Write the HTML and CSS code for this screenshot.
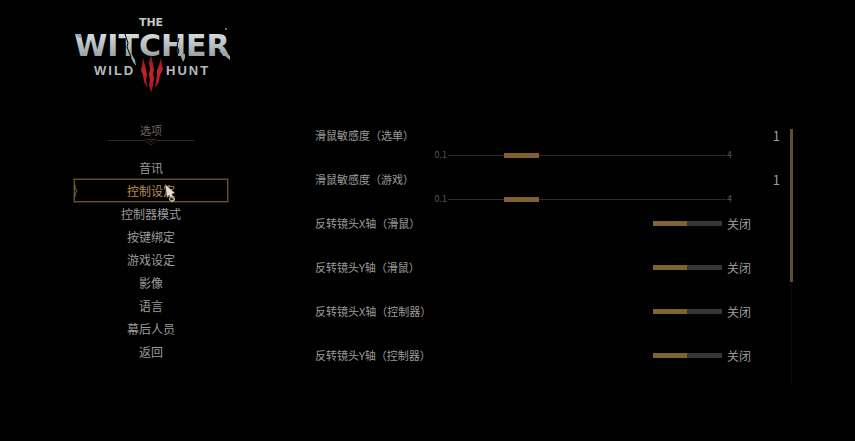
FILE: index.html
```html
<!DOCTYPE html>
<html lang="zh-Hans">
<head>
<meta charset="utf-8">
<title>控制设定</title>
<link rel="stylesheet" href="styles.css">
</head>
<body>
<div class="screen">
  <aside class="sidebar">
    <svg class="logo" viewBox="0 0 160 84" role="img" aria-label="The Witcher Wild Hunt">
      <defs>
        <linearGradient id="steel" x1="0" y1="0" x2="0" y2="1">
          <stop offset="0" stop-color="#e6ebec"/>
          <stop offset=".5" stop-color="#b5bec1"/>
          <stop offset="1" stop-color="#859195"/>
        </linearGradient>
        <linearGradient id="blood" x1="0" y1="0" x2="0" y2="1">
          <stop offset="0" stop-color="#8e1720"/>
          <stop offset=".5" stop-color="#c9222e"/>
          <stop offset="1" stop-color="#8e1720"/>
        </linearGradient>
      </defs>
      <text class="logo-the" x="77" y="12" text-anchor="middle">THE</text>
      <text class="logo-main" x="78" y="42" text-anchor="middle" fill="url(#steel)">WITCHER</text>
      <path d="M1 20h5l2 4H5zM52 38l4 3 3 7 3 4-1-6-4-7zM106 40h5v4l-2 4zM149 37l7 5v4l-11-9z" fill="#98a3a7"/>
      <path d="M51 20l3 9-1 4 4 10M105 24l-2 8 2 5-2 5" fill="none" stroke="#010101"/>
      <text class="logo-sub" x="20" y="61">WILD</text>
      <text class="logo-sub" x="92" y="61">HUNT</text>
      <circle cx="152" cy="15" r="1" fill="#8d9699"/>
      <g fill="url(#blood)">
        <path d="M69 44l2 7 1 5 1 5-1 5 2 8-4-6-1-7-2-5 1-4z"/>
        <path d="M77 41l2 9 1 6-1 4 1 5-1 6-2 8-2-8 1-5-1-6 1-5-1-6z"/>
        <path d="M87 44l-2 7-2 5v5l-1 5-1 8 4-6 1-7 3-6-1-4z"/>
      </g>
    </svg>
    <h1 class="title">选项</h1>
    <svg class="ornament" viewBox="0 0 86 8" aria-hidden="true">
      <path d="M0 2.5h36l3-1h8l3 1h36M38 3l5 4 5-4M41 2l2 2 2-2" fill="none" stroke="#2e2b26"/>
    </svg>
    <nav class="menu">
      <a class="item" href="#audio">音讯</a>
      <a class="item selected" href="#control" aria-current="page">控制设定
        <svg class="notch" viewBox="0 0 5 12" aria-hidden="true"><path d="M1 0v3l2 3-2 3v3" fill="none" stroke="#8a6a3c"/></svg>
        <svg class="cursor" viewBox="0 0 14 22" aria-hidden="true">
          <path d="M1 1l10 9-3 1 2 4-2 1-3-4-2 3z" fill="#e4dfd3" stroke="#39342c" stroke-width=".5"/>
          <circle cx="8" cy="16" r="2.5" fill="#292620" stroke="#c9c3b6"/>
          <path d="M6 13l4 3M7 18l3-1" stroke="#c9c3b6"/>
        </svg>
      </a>
      <a class="item" href="#pad">控制器模式</a>
      <a class="item" href="#keys">按键绑定</a>
      <a class="item" href="#game">游戏设定</a>
      <a class="item" href="#video">影像</a>
      <a class="item" href="#language">语言</a>
      <a class="item" href="#credits">幕后人员</a>
      <a class="item" href="#back">返回</a>
    </nav>
  </aside>
  <main class="panel">
    <div class="settings">
      <div class="row">
        <div class="line"><label for="menu-speed">滑鼠敏感度（选单）</label><output for="menu-speed">1</output></div>
        <div class="scale"><span class="low">0.1</span><input class="slider" id="menu-speed" type="range" min="0.1" max="4" step="0.1" value="1"><span>4</span></div>
      </div>
      <div class="row">
        <div class="line"><label for="game-speed">滑鼠敏感度（游戏）</label><output for="game-speed">1</output></div>
        <div class="scale"><span class="low">0.1</span><input class="slider" id="game-speed" type="range" min="0.1" max="4" step="0.1" value="1"><span>4</span></div>
      </div>
      <div class="row">
        <div class="line"><label for="mouse-x">反转镜头X轴（滑鼠）</label><span class="option"><input class="toggle" id="mouse-x" type="checkbox"><span>关闭</span></span></div>
      </div>
      <div class="row">
        <div class="line"><label for="mouse-y">反转镜头Y轴（滑鼠）</label><span class="option"><input class="toggle" id="mouse-y" type="checkbox"><span>关闭</span></span></div>
      </div>
      <div class="row">
        <div class="line"><label for="pad-x">反转镜头X轴（控制器）</label><span class="option"><input class="toggle" id="pad-x" type="checkbox"><span>关闭</span></span></div>
      </div>
      <div class="row">
        <div class="line"><label for="pad-y">反转镜头Y轴（控制器）</label><span class="option"><input class="toggle" id="pad-y" type="checkbox"><span>关闭</span></span></div>
      </div>
    </div>
    <div class="scroll"><div class="scroll-thumb"></div></div>
  </main>
</div>
</body>
</html>
```
FILE: styles.css
```css
* {
  box-sizing: border-box;
}

body {
  margin: 0;
  min-height: 100vh;
  background: #010101;
  color: #9b9b9b;
  font-family: "Noto Sans CJK SC", sans-serif;
  font-size: 12px;
}

.screen {
  display: grid;
  grid-template-columns: 154px 1fr;
  column-gap: 87px;
  padding: 14px 62px 0 74px;
}

.sidebar {
  display: flex;
  flex-direction: column;
  align-items: center;
}

.logo {
  display: block;
  align-self: flex-start;
  width: 160px;
  height: 84px;
  overflow: visible;
}

.logo-the,
.logo-main {
  font-family: "DejaVu Sans", sans-serif;
  font-weight: bold;
}

.logo-the {
  font-size: 11px;
  fill: #c3c9cb;
}

.logo-main {
  font-size: 30px;
}

.logo-sub {
  font-family: "Liberation Sans", sans-serif;
  font-size: 13px;
  font-weight: bold;
  letter-spacing: 2px;
  fill: #b4babc;
}

.title {
  margin: 24px 0 0;
  font-size: 11px;
  font-weight: 400;
  line-height: 16px;
  color: #6e6860;
}

.ornament {
  display: block;
  width: 86px;
  height: 8px;
}

.menu {
  align-self: stretch;
  margin-top: 10px;
}

.item {
  display: block;
  position: relative;
  height: 23px;
  line-height: 23px;
  text-align: center;
  color: inherit;
  text-decoration: none;
}

.selected {
  color: #bd8d49;
  box-shadow: inset 0 0 0 1px #684f2e, 0 0 0 1px #2b2114;
}

.notch {
  position: absolute;
  left: 0;
  top: 6px;
  width: 5px;
  height: 12px;
}

.cursor {
  position: absolute;
  left: 90px;
  top: 4px;
  width: 14px;
  height: 22px;
}

.panel {
  display: flex;
  gap: 10px;
  padding-top: 110px;
}

.settings {
  flex: 1;
}

.row {
  height: 44px;
}

.line {
  display: flex;
  justify-content: space-between;
  align-items: center;
  height: 22px;
}

.line label {
  font-size: 11px;
}

.line output {
  font-size: 13px;
}

.scale {
  display: grid;
  grid-template-columns: 132px 1fr 53px;
  column-gap: 1px;
  align-items: center;
  height: 18px;
  font-size: 9px;
  line-height: 18px;
  color: #555;
}

.low {
  text-align: right;
}

.slider {
  appearance: none;
  width: 100%;
  height: 5px;
  margin: 0;
  background: linear-gradient(#2c2c2c, #2c2c2c) center / 100% 1px no-repeat;
}

.slider::-webkit-slider-thumb {
  appearance: none;
  width: 35px;
  height: 5px;
  background: #80602f;
}

.option {
  display: flex;
  align-items: center;
  gap: 5px;
  margin-right: 29px;
}

.toggle {
  appearance: none;
  width: 69px;
  height: 5px;
  margin: 0;
  background: linear-gradient(90deg, #80642f 50%, #373737 50%);
}

.scroll {
  width: 3px;
  margin: 5px 0 4px;
  background: linear-gradient(#0c0c0c, #0c0c0c) center / 1px 100% no-repeat;
}

.scroll-thumb {
  height: 60%;
  background: #5d5030;
}
```
